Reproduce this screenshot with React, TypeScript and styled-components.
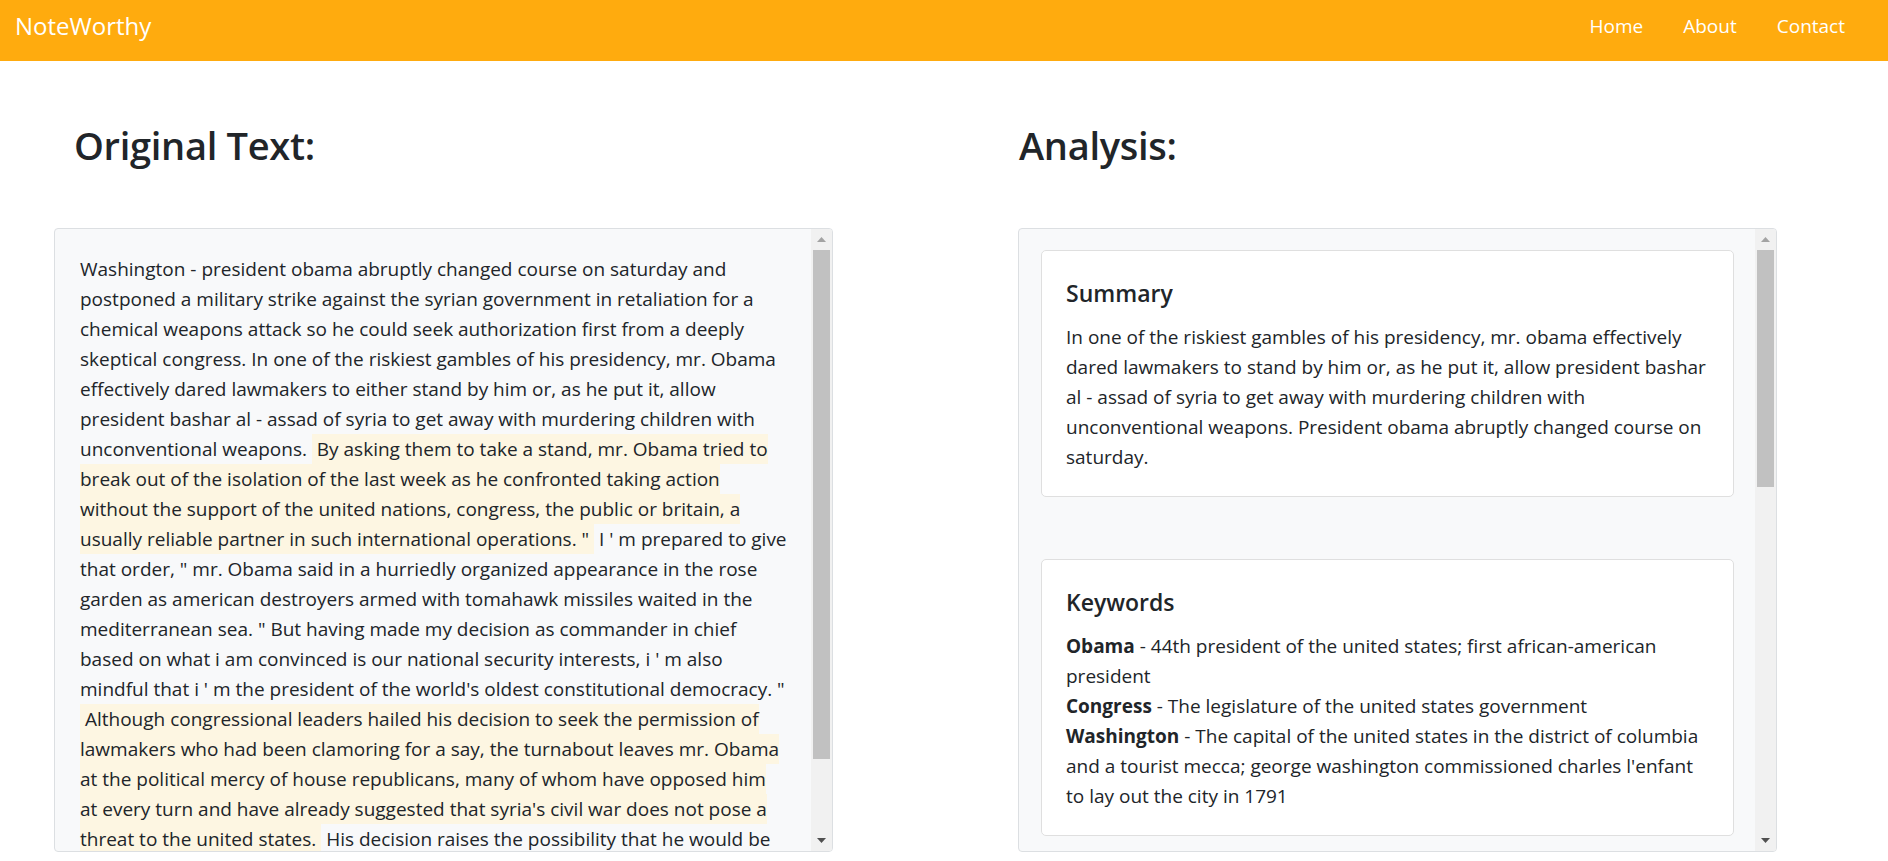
import React from "react";
import styled, { createGlobalStyle } from "styled-components";

const GlobalStyle = createGlobalStyle`
  html, body {
    margin: 0;
    padding: 0;
    background: #ffffff;
  }
  body {
    font-family: "Open Sans", "Noto Sans", "Liberation Sans", sans-serif;
    color: #212529;
  }
  *, *::before, *::after {
    box-sizing: border-box;
  }
`;

const original = {
  intro:
    "Washington - president obama abruptly changed course on saturday and postponed a military strike against the syrian government in retaliation for a chemical weapons attack so he could seek authorization first from a deeply skeptical congress. In one of the riskiest gambles of his presidency, mr. Obama effectively dared lawmakers to either stand by him or, as he put it, allow president bashar al - assad of syria to get away with murdering children with unconventional weapons. ",
  first:
    "\u00a0By asking them to take a stand, mr. Obama tried to break out of the isolation of the last week as he confronted taking action without the support of the united nations, congress, the public or britain, a usually reliable partner in such international operations. \" ",
  middle:
    "\u00a0I ' m prepared to give that order, \" mr. Obama said in a hurriedly organized appearance in the rose garden as american destroyers armed with tomahawk missiles waited in the mediterranean sea. \" But having made my decision as commander in chief based on what i am convinced is our national security interests, i ' m also mindful that i ' m the president of the world's oldest constitutional democracy. \" ",
  second:
    "\u00a0Although congressional leaders hailed his decision to seek the permission of lawmakers who had been clamoring for a say, the turnabout leaves mr. Obama at the political mercy of house republicans, many of whom have opposed him at every turn and have already suggested that syria's civil war does not pose a threat to the united states. ",
  tail:
    "\u00a0His decision raises the possibility that he would be rebuffed by congress, a stinging blow that would leave him weakened at home and abroad at a moment of international tension.",
};

const summary =
  "In one of the riskiest gambles of his presidency, mr. obama effectively dared lawmakers to stand by him or, as he put it, allow president bashar al - assad of syria to get away with murdering children with unconventional weapons. President obama abruptly changed course on saturday.";

const keywords = [
  { word: "Obama", text: "44th president of the united states; first african-american president" },
  { word: "Congress", text: "The legislature of the united states government" },
  {
    word: "Washington",
    text: "The capital of the united states in the district of columbia and a tourist mecca; george washington commissioned charles l'enfant to lay out the city in 1791",
  },
];

const entities = [
  ["Barack Obama", "Person"],
  ["Bashar al - Assad", "Person"],
  ["Syria", "Location"],
  ["Washington", "Location"],
  ["Congress", "Organization"],
  ["United Nations", "Organization"],
  ["Britain", "Location"],
  ["Rose Garden", "Location"],
  ["Mediterranean Sea", "Location"],
  ["House Republicans", "Organization"],
];

// classic windows-style scrollbar, drawn since the page itself hides native ones
const Scrollbar = ({ thumb }: { thumb: number }) => (
  <Track>
    <ArrowButton>
      <svg width="9" height="5" viewBox="0 0 9 5">
        <polygon points="0,5 9,5 4.5,0" fill="#a3a3a3" />
      </svg>
    </ArrowButton>
    <Thumb $size={thumb} />
    <TrackRest />
    <ArrowButton>
      <svg width="9" height="5" viewBox="0 0 9 5">
        <polygon points="0,0 9,0 4.5,5" fill="#505050" />
      </svg>
    </ArrowButton>
  </Track>
);

const App = () => {
  return (
    <>
      <GlobalStyle />
      <Navbar>
        <Brand href="#">NoteWorthy</Brand>
        <NavList>
          <li><NavLink href="#">Home</NavLink></li>
          <li><NavLink href="#">About</NavLink></li>
          <li><NavLink href="#">Contact</NavLink></li>
        </NavList>
      </Navbar>

      <Main>
        <Column>
          <Heading $indent={20}>Original Text:</Heading>
          <Panel>
            <Pane $pad="25px 23px 24px 25px">
              <Passage>
                {original.intro}
                <Mark>{original.first}</Mark>
                {original.middle}
                <Mark>{original.second}</Mark>
                {original.tail}
              </Passage>
            </Pane>
            <Scrollbar thumb={509} />
          </Panel>
        </Column>

        <Column>
          <Heading $indent={1}>Analysis:</Heading>
          <Panel>
            <Pane $pad="21px 21px 22px 22px" $stack>
              <Card>
                <CardTitle>Summary</CardTitle>
                <CardText>{summary}</CardText>
              </Card>
              <Card>
                <CardTitle>Keywords</CardTitle>
                <CardText>
                  {keywords.map((k, i) => (
                    <React.Fragment key={k.word}>
                      {i > 0 && <br />}
                      <strong>{k.word}</strong> - {k.text}
                    </React.Fragment>
                  ))}
                </CardText>
              </Card>
              <Card>
                <CardTitle>Key Sentences</CardTitle>
                <CardText>
                  By asking them to take a stand, mr. Obama tried to break out of the isolation of the last week as he confronted taking action without the support of the united nations, congress, the public or britain, a usually reliable partner in such international operations.
                  <br />
                  Although congressional leaders hailed his decision to seek the permission of lawmakers who had been clamoring for a say, the turnabout leaves mr. Obama at the political mercy of house republicans.
                </CardText>
              </Card>
              <Card>
                <CardTitle>Entities</CardTitle>
                <CardText>
                  {entities.map(([name, kind], i) => (
                    <React.Fragment key={name}>
                      {i > 0 && <br />}
                      <strong>{name}</strong> - {kind}
                    </React.Fragment>
                  ))}
                </CardText>
              </Card>
            </Pane>
            <Scrollbar thumb={237} />
          </Panel>
        </Column>
      </Main>
    </>
  );
};

export default App;

const Navbar = styled.nav`
  height: 61px;
  background-color: #ffab0e;
  display: flex;
  align-items: center;
  justify-content: space-between;
  padding: 0 23px 8px 15px;
`;

const Brand = styled.a`
  color: #ffffff;
  font-size: 24px;
  line-height: 1.2;
  text-decoration: none;
`;

const NavList = styled.ul`
  display: flex;
  list-style: none;
  margin: 0;
  padding: 0;
`;

const NavLink = styled.a`
  display: block;
  padding: 0 20px;
  color: #ffffff;
  font-size: 19px;
  line-height: 1.5;
  text-decoration: none;
`;

const Main = styled.main`
  display: grid;
  grid-template-columns: 779px 759px;
  column-gap: 185px;
  padding: 62px 0 0 54px;
`;

const Column = styled.section`
  display: flex;
  flex-direction: column;
`;

const Heading = styled.h2<{ $indent: number }>`
  margin: 0 0 59px;
  padding-left: ${(p) => p.$indent}px;
  font-size: 38px;
  font-weight: 600;
  letter-spacing: -0.3px;
  line-height: 1.2;
  color: #212529;
`;

const Panel = styled.div`
  display: flex;
  height: 624px;
  background: #f8f9fa;
  border: 1px solid #dcdfe2;
  border-radius: 4px;
  overflow: hidden;
`;

const Pane = styled.div<{ $pad: string; $stack?: boolean }>`
  flex: 1;
  min-width: 0;
  overflow-y: auto;
  scrollbar-width: none;
  padding: ${(p) => p.$pad};
  display: ${(p) => (p.$stack ? "flex" : "block")};
  flex-direction: column;
  gap: 62px;
`;

const Track = styled.div`
  width: 21px;
  flex-shrink: 0;
  display: flex;
  flex-direction: column;
  background: #f1f1f1;
`;

const ArrowButton = styled.div`
  height: 21px;
  flex-shrink: 0;
  display: flex;
  align-items: center;
  justify-content: center;
`;

const Thumb = styled.div<{ $size: number }>`
  height: ${(p) => p.$size}px;
  flex-shrink: 0;
  margin: 0 2px 0 2px;
  background: #c1c1c1;
`;

const TrackRest = styled.div`
  flex: 1;
`;

const Passage = styled.p`
  margin: 0;
  font-size: 19px;
  line-height: 30px;
`;

const Mark = styled.span`
  background-color: #fdf6e2;
  padding: 2px 0;
`;

const Card = styled.div`
  flex-shrink: 0;
  background: #ffffff;
  border: 1px solid #dfdfdf;
  border-radius: 5px;
  padding: 24px;
`;

const CardTitle = styled.h5`
  margin: 3px 0 14px;
  font-size: 23px;
  font-weight: 600;
  line-height: 30px;
  color: #212529;
`;

const CardText = styled.p`
  margin: 0;
  font-size: 19px;
  line-height: 30px;

  strong {
    font-weight: 700;
  }
`;
